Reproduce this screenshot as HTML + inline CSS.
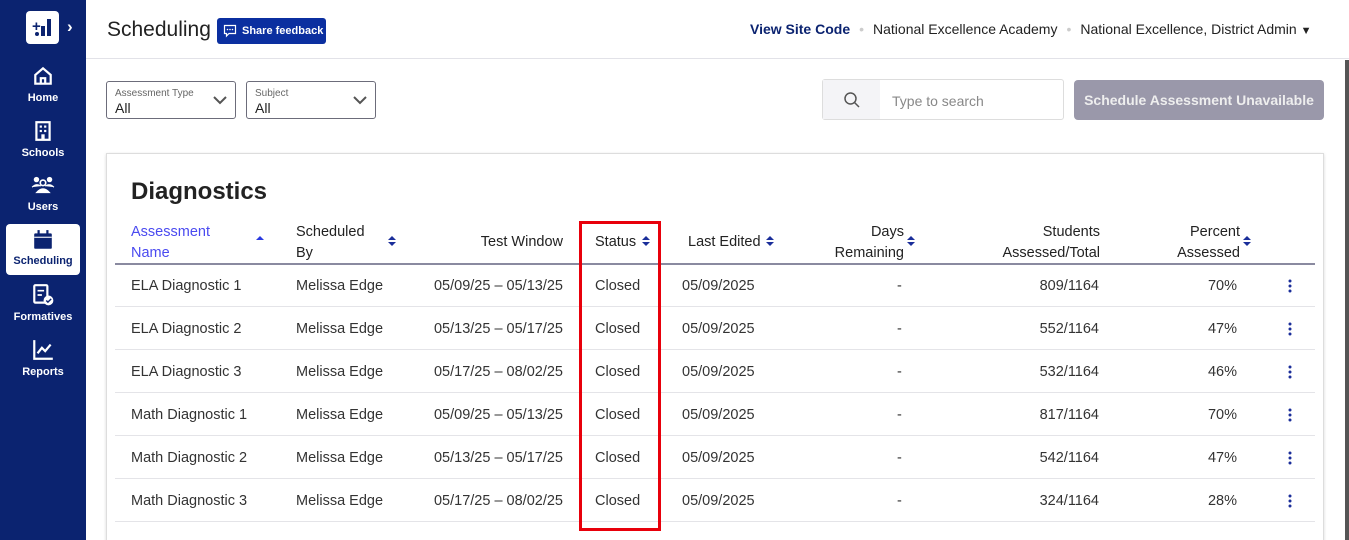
<!DOCTYPE html>
<html style="overflow:hidden;width:1349px;height:540px"><head><meta charset="utf-8"><style>
*{box-sizing:border-box;margin:0;padding:0}
html,body{overflow:hidden}
body{width:1349px;height:540px;background:#f7f7f9;font-family:"Liberation Sans",sans-serif;color:#222;position:relative}
.side{position:absolute;left:0;top:0;width:86px;height:540px;background:#0b2370}
.logo{position:absolute;left:26px;top:11px;width:33px;height:33px;background:#fff;border-radius:4px}
.nav{position:absolute;left:6px;text-align:center;color:#fff;font-size:11px;font-weight:bold;width:74px}
.nav svg{display:block;margin:0 auto 5px}
.act{background:#fff;color:#0b2370;border-radius:4px}
.top{position:absolute;left:86px;top:0;right:0;height:59px;background:#fff;border-bottom:1px solid #e2e2e8}
.main{position:absolute;left:86px;top:59px;right:0;bottom:0;background:#fff}
.abs{position:absolute}
.sel{position:absolute;top:81px;height:38px;border:1px solid #6c6c7a;border-radius:3px;background:#fff}
.sel .l{position:absolute;left:8px;top:6px;font-size:10px;color:#666}
.sel .v{position:absolute;left:8px;top:18px;font-size:14px;color:#222}
.card{position:absolute;left:106px;top:153px;width:1218px;height:400px;background:#fff;border:1px solid #ddd;box-shadow:0 1px 3px rgba(0,0,0,.15)}
.t{position:absolute;font-size:14.5px;color:#333;white-space:nowrap}
.h{position:absolute;font-size:14.5px;color:#222;line-height:21px;white-space:nowrap}
.row{position:absolute;left:115px;width:1200px;height:1px;background:#e4e4e8}
.ar{position:absolute;width:0;height:0;border-left:4px solid transparent;border-right:4px solid transparent}
</style></head><body>
<div class="side">
 <div class="logo"><svg width="33" height="33"><text x="6" y="20" font-size="15" font-weight="bold" fill="#0b2370" font-family="Liberation Sans">+</text><rect x="15" y="15" width="4" height="10" fill="#0b2370"/><rect x="21" y="8" width="4" height="17" fill="#0b2370"/><circle cx="11" cy="23" r="2" fill="#0b2370"/></svg></div>
 <div class="abs" style="left:67px;top:17px;color:#fff;font-weight:bold;font-size:17px">›</div>
 <div class="nav" style="top:65px"><svg width="22" height="22" viewBox="0 0 20 20"><path d="M3 9 L10 3 L17 9 V17 H3 Z M8 17 V12 H12 V17" fill="none" stroke="#fff" stroke-width="2"/></svg>Home</div>
 <div class="nav" style="top:120px"><svg width="22" height="22" viewBox="0 0 20 20"><rect x="4" y="2" width="12" height="16" fill="none" stroke="#fff" stroke-width="2"/><rect x="7" y="5" width="2" height="2" fill="#fff"/><rect x="11" y="5" width="2" height="2" fill="#fff"/><rect x="7" y="9" width="2" height="2" fill="#fff"/><rect x="11" y="9" width="2" height="2" fill="#fff"/><rect x="8.5" y="13" width="3" height="5" fill="#fff"/></svg>Schools</div>
 <div class="nav" style="top:174px"><svg width="24" height="22" viewBox="0 0 22 20"><circle cx="5" cy="5" r="2.5" fill="#fff"/><circle cx="17" cy="5" r="2.5" fill="#fff"/><circle cx="11" cy="8" r="2.5" fill="none" stroke="#fff" stroke-width="1.5"/><path d="M1 12 Q5 8 9 11 M13 11 Q17 8 21 12 M5 17 Q11 10 17 17 Z" fill="#fff" stroke="#fff"/></svg>Users</div>
 <div class="nav act" style="top:224px;height:51px;padding-top:5px"><svg width="22" height="22" viewBox="0 0 20 20" style="margin-bottom:4px"><rect x="2" y="4" width="16" height="14" rx="1" fill="#0b2370"/><rect x="5" y="1" width="2" height="4" fill="#0b2370"/><rect x="13" y="1" width="2" height="4" fill="#0b2370"/><rect x="2" y="7" width="16" height="1" fill="#fff"/></svg>Scheduling</div>
 <div class="nav" style="top:283px"><svg width="24" height="24" viewBox="0 0 22 22" style="margin-bottom:4px"><rect x="3" y="2" width="12" height="16" rx="1" fill="none" stroke="#fff" stroke-width="2"/><path d="M6 7H12M6 11H10" stroke="#fff" stroke-width="1.5"/><circle cx="16" cy="16" r="4.5" fill="#fff"/><path d="M14 16l1.5 1.5L18.5 14.5" stroke="#0b2370" stroke-width="1.3" fill="none"/></svg>Formatives</div>
 <div class="nav" style="top:338px"><svg width="24" height="24" viewBox="0 0 22 22" style="margin-bottom:4px"><path d="M3 2V19H20" stroke="#fff" stroke-width="2" fill="none"/><path d="M6 14L10 9L13 12L18 6" stroke="#fff" stroke-width="2" fill="none"/></svg>Reports</div>
</div>
<div class="top">
 <div class="abs" style="left:21px;top:18px;font-size:21px;color:#222">Scheduling</div>
 <div class="abs" style="left:131px;top:18px;width:109px;height:26px;background:#0b2fa0;border-radius:3px;color:#fff;font-size:11px;font-weight:bold;line-height:26px;padding-left:25px">Share feedback
  <svg class="abs" style="left:6px;top:6px" width="14" height="14" viewBox="0 0 14 14"><path d="M1.5 1.5H12.5V9.5H6L3.5 12V9.5H1.5Z" fill="none" stroke="#fff" stroke-width="1.2"/><circle cx="4.5" cy="5.5" r=".8" fill="#fff"/><circle cx="7" cy="5.5" r=".8" fill="#fff"/><circle cx="9.5" cy="5.5" r=".8" fill="#fff"/></svg></div>
 <div class="abs" style="left:664px;top:21px;font-size:14px;white-space:nowrap"><b style="color:#0b2370">View Site Code</b><span style="color:#ccc;margin:0 9px">•</span>National Excellence Academy<span style="color:#ccc;margin:0 9px">•</span>National Excellence, District Admin <span style="font-size:11px">▼</span></div>
</div>
<div class="main"></div>
<div class="abs" style="left:1345px;top:60px;width:4px;height:480px;background:#555"></div>
<div class="sel" style="left:106px;width:130px"><div class="l">Assessment Type</div><div class="v">All</div><svg class="abs" style="left:106px;top:13px" width="14" height="10"><path d="M1 2L7 8L13 2" stroke="#555" stroke-width="2" fill="none"/></svg></div>
<div class="sel" style="left:246px;width:130px"><div class="l">Subject</div><div class="v">All</div><svg class="abs" style="left:106px;top:13px" width="14" height="10"><path d="M1 2L7 8L13 2" stroke="#555" stroke-width="2" fill="none"/></svg></div>
<div class="abs" style="left:822px;top:79px;width:242px;height:41px;border:1px solid #ddd;border-radius:3px;background:#fff">
 <div class="abs" style="left:0;top:0;width:57px;height:39px;background:#f4f4f7"></div>
 <svg class="abs" style="left:20px;top:11px" width="18" height="18"><circle cx="7.5" cy="7.5" r="5.5" stroke="#555" stroke-width="1.5" fill="none"/><path d="M11.5 11.5L16 16" stroke="#555" stroke-width="1.5"/></svg>
 <div class="abs" style="left:69px;top:13px;font-size:14px;color:#888">Type to search</div></div>
<div class="abs" style="left:1074px;top:80px;width:250px;height:40px;background:#9a98aa;border-radius:4px;color:#eee;font-size:14px;font-weight:bold;text-align:center;line-height:40px">Schedule Assessment Unavailable</div>
<div class="card"></div>
<div class="abs" style="left:131px;top:178px;font-size:24px;font-weight:bold;color:#222">Diagnostics</div>
<div class="h" style="left:131px;top:222px;color:#4a4af0">Assessment<br>Name</div>
<div class="ar" style="left:256px;top:236px;border-bottom:4px solid #2a3ae0"></div>
<div class="h" style="left:296px;top:222px">Scheduled<br>By</div>
<div class="h" style="left:440px;top:232px;width:123px;text-align:right">Test Window</div>
<div class="h" style="left:595px;top:232px">Status</div>
<div class="h" style="left:688px;top:232px">Last Edited</div>
<div class="h" style="left:780px;top:222px;width:124px;text-align:right">Days<br>Remaining</div>
<div class="h" style="left:950px;top:222px;width:150px;text-align:right">Students<br>Assessed/Total</div>
<div class="h" style="left:1120px;top:222px;width:120px;text-align:right">Percent<br>Assessed</div>
<div class="ar" style="left:388px;top:236px;border-bottom:4px solid #1b2e9a"></div><div class="ar" style="left:388px;top:242px;border-top:4px solid #1b2e9a"></div>
<div class="ar" style="left:642px;top:236px;border-bottom:4px solid #1b2e9a"></div><div class="ar" style="left:642px;top:242px;border-top:4px solid #1b2e9a"></div>
<div class="ar" style="left:766px;top:236px;border-bottom:4px solid #1b2e9a"></div><div class="ar" style="left:766px;top:242px;border-top:4px solid #1b2e9a"></div>
<div class="ar" style="left:907px;top:236px;border-bottom:4px solid #1b2e9a"></div><div class="ar" style="left:907px;top:242px;border-top:4px solid #1b2e9a"></div>
<div class="ar" style="left:1243px;top:236px;border-bottom:4px solid #1b2e9a"></div><div class="ar" style="left:1243px;top:242px;border-top:4px solid #1b2e9a"></div>
<div class="row" style="top:263px;height:2px;background:#8a8aa0"></div>
<div id="rows"></div>
<script>
var d=[["ELA Diagnostic 1","05/09/25 – 05/13/25","809/1164","70%"],["ELA Diagnostic 2","05/13/25 – 05/17/25","552/1164","47%"],["ELA Diagnostic 3","05/17/25 – 08/02/25","532/1164","46%"],["Math Diagnostic 1","05/09/25 – 05/13/25","817/1164","70%"],["Math Diagnostic 2","05/13/25 – 05/17/25","542/1164","47%"],["Math Diagnostic 3","05/17/25 – 08/02/25","324/1164","28%"]];
var h="";d.forEach(function(r,i){var y=278+i*43;
h+='<div class="t" style="left:131px;top:'+y+'px">'+r[0]+'</div><div class="t" style="left:296px;top:'+y+'px">Melissa Edge</div><div class="t" style="left:380px;width:183px;text-align:right;top:'+y+'px">'+r[1]+'</div><div class="t" style="left:595px;top:'+y+'px">Closed</div><div class="t" style="left:682px;top:'+y+'px">05/09/2025</div><div class="t" style="left:897px;top:'+y+'px">-</div><div class="t" style="left:1000px;width:99px;text-align:right;top:'+y+'px">'+r[2]+'</div><div class="t" style="left:1180px;width:57px;text-align:right;top:'+y+'px">'+r[3]+'</div><svg class="abs" style="left:1287px;top:'+(y+1)+'px" width="6" height="14"><circle cx="3" cy="2" r="1.5" fill="#1b2e9a"/><circle cx="3" cy="7" r="1.5" fill="#1b2e9a"/><circle cx="3" cy="12" r="1.5" fill="#1b2e9a"/></svg><div class="row" style="top:'+(306+i*43)+'px"></div>';});
document.getElementById("rows").innerHTML=h;
</script>
<div class="abs" style="left:579px;top:221px;width:82px;height:310px;border:3px solid #e8000b"></div>
</body></html>
